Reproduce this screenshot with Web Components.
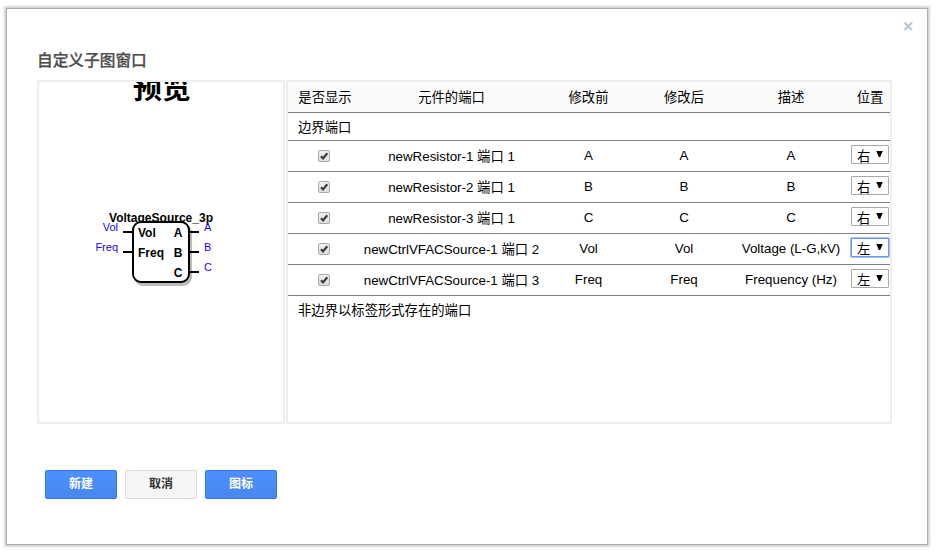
<!DOCTYPE html>
<html lang="zh-CN">
<head>
<meta charset="utf-8">
<title>自定义子图窗口</title>
<style>
html,body{margin:0;height:100%;background:#fff;overflow:hidden}
body{font-family:"Liberation Sans","Noto Sans CJK SC",sans-serif;box-sizing:border-box;padding:8px 8px 8px 6px}
</style>
</head>
<body>
<subgraph-dialog heading="自定义子图窗口">
  <block-preview slot="preview"></block-preview>
  <port-table slot="ports"></port-table>
  <dialog-button slot="actions" primary>新建</dialog-button>
  <dialog-button slot="actions">取消</dialog-button>
  <dialog-button slot="actions" primary>图标</dialog-button>
</subgraph-dialog>
<script>
const define = (name, render) => customElements.define(name, class extends HTMLElement {
  connectedCallback() {
    if (!this.shadowRoot) this.attachShadow({mode: 'open'}).innerHTML = render(this);
  }
});

define('subgraph-dialog', el => `
<style>
:host{display:flex;flex-direction:column;box-sizing:border-box;width:922px;height:537px;border:1px solid #acacac;
 background:#fff;box-shadow:0 0 0 2px rgba(0,0,0,.07),0 0 4px 1px rgba(0,0,0,.16);padding:10px 30px 0}
header{display:flex;justify-content:flex-end;height:15px;margin-right:-17px}
header svg{display:block;margin-top:2px}
h1{margin:14px 0 0;height:32px;line-height:26px;font-size:15.7px;font-weight:500;color:#4d4d4d;white-space:nowrap;-webkit-text-stroke:.25px #4d4d4d}
.panels{display:flex;gap:1px;height:344px;width:855px}
footer{display:flex;gap:8px;padding:46px 0 0 8px}
</style>
<header><svg width="11" height="11" viewBox="0 0 11 11"><path d="M1.5 1.5 9 9M9 1.500 1.500 9" stroke="#bac8d8" stroke-width="2.200"/></svg></header>
<h1>${el.getAttribute('heading')}</h1>
<div class="panels"><slot name="preview"></slot><slot name="ports"></slot></div>
<footer><slot name="actions"></slot></footer>`);

define('dialog-button', () => `
<style>
:host{display:block;box-sizing:border-box;width:72px;height:29px;line-height:27px;border:1px solid #dcdcdc;border-radius:2px;
 background:#f5f5f5;color:#333;text-align:center;font-size:12px;font-weight:bold}
:host([primary]){border-color:#3079ed;background:linear-gradient(#4d90fe,#4787ed);color:#fff}
</style><slot></slot>`);

define('block-preview', () => `
<style>
:host{display:block;box-sizing:border-box;width:248px;height:344px;border:2px solid #eee;overflow:hidden}
svg{display:block}
text{font-family:"Liberation Sans","Noto Sans CJK SC",sans-serif}
.b{font-weight:bold;font-size:12px;fill:#000}
.l{font-size:11px;fill:#1c00ff}
</style>
<svg width="244" height="340" viewBox="39 82 244 340">
  <text x="162" y="99" text-anchor="middle" font-size="29" font-weight="bold">预览</text>
  <text class="b" x="109" y="222" textLength="104">VoltageSource_3p</text>
  <rect x="135" y="225" width="56" height="60" rx="8" fill="#bbb" stroke="#bbb" stroke-width="2"/>
  <rect x="133" y="222" width="56" height="60" rx="8" fill="#fff" stroke="#000" stroke-width="2"/>
  <path d="M123 232h10M123 252h10M189 232h10M189 252h10M189 272h10" stroke="#000" stroke-width="2"/>
  <text class="b" x="138" y="237">Vol</text><text class="b" x="138" y="257">Freq</text>
  <g text-anchor="end"><text class="b" x="182.500" y="237">A</text><text class="b" x="182.500" y="257">B</text><text class="b" x="182.500" y="277">C</text>
  <text class="l" x="118" y="231">Vol</text><text class="l" x="118" y="251">Freq</text></g>
  <text class="l" x="204" y="231">A</text><text class="l" x="204" y="251">B</text><text class="l" x="204" y="271">C</text>
</svg>`);

define('port-check', () => `
<style>:host{display:block;width:12px;height:12px}svg{display:block}</style>
<svg width="12" height="12" viewBox="0 0 12 12"><defs><linearGradient id="g" x2="0" y2="1"><stop stop-color="#f2f2f2"/><stop offset="1" stop-color="#dcdcdc"/></linearGradient></defs>
<rect x=".5" y=".5" width="11" height="11" rx="1.500" fill="url(#g)" stroke="#aaa"/><path d="M3 6.300 5 8.400 9.300 3.200" fill="none" stroke="#3c3c3c" stroke-width="2.200"/></svg>`);

define('side-select', () => `
<style>
:host{display:flex;box-sizing:border-box;width:38px;height:19px;border:1px solid #a9a9a9;border-radius:1px;background:#fff;padding-left:5px;text-align:left}
:host([focused]){border-color:#6b98e4;box-shadow:0 0 0 1px #a3c0f0}
span{font-size:13.333px;line-height:22px;height:17px;width:19px}
svg{display:block;margin-top:5px}
</style><span><slot></slot></span><svg width="7" height="7"><path d="M.3 0h6.400L4.200 6H2.800Z" fill="#000"/></svg>`);

define('port-table', () => {
  const rows = [
    ['newResistor-1 端口 1', 'A', 'A', '右'],
    ['newResistor-2 端口 1', 'B', 'B', '右'],
    ['newResistor-3 端口 1', 'C', 'C', '右'],
    ['newCtrlVFACSource-1 端口 2', 'Vol', 'Voltage (L-G,kV)', '左', 'focused'],
    ['newCtrlVFACSource-1 端口 3', 'Freq', 'Frequency (Hz)', '左']
  ];
  return `
<style>
:host{display:block;box-sizing:border-box;width:606px;height:344px;border:2px solid #eee;font-size:13.333px;color:#000}
.row{display:grid;grid-template-columns:74px 179px 95px 96px 118px 40px;height:30px;line-height:30px;border-bottom:1px solid #808080;
 text-align:center;white-space:nowrap;align-items:center}
.row>span{height:30px}
.head{background:#fafafa;line-height:31px}
.row>.port{line-height:31px}
.group{height:27px;line-height:29px;padding-left:10px;border-bottom:1px solid #808080}
.group.last{border:0;line-height:29px}
port-check{margin:-1px 0 0 30px}
side-select{justify-self:center;margin-top:-4px}
</style>
<div class="row head">${['是否显示', '元件的端口', '修改前', '修改后', '描述', '位置'].map(t => `<span>${t}</span>`).join('')}</div>
<div class="group">边界端口</div>
${rows.map(([port, name, desc, side, focus = '']) => `<div class="row"><port-check></port-check><span class="port">${port}</span><span>${name}</span><span>${name}</span><span>${desc}</span><side-select ${focus}>${side}</side-select></div>`).join('')}
<div class="group last">非边界以标签形式存在的端口</div>`;
});
</script>
</body>
</html>
